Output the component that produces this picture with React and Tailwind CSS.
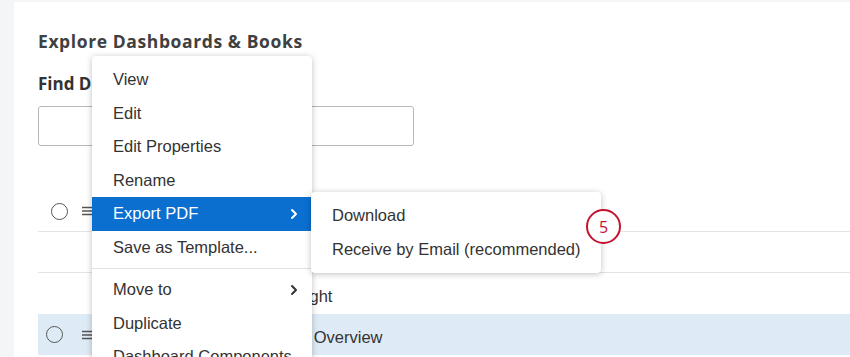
import React from 'react';

const rows = [
  { id: 1, name: 'Customer Satisfaction Dashboard', selectable: true, highlight: false },
  { id: 2, name: 'Quarterly Results Book', selectable: false, highlight: false },
  { id: 3, name: 'Customer Experience Spotlight', selectable: false, highlight: false },
  { id: 4, name: 'Employee Engagement Q3 Overview', selectable: true, highlight: true },
];

const menuItems = [
  { label: 'View' },
  { label: 'Edit' },
  { label: 'Edit Properties' },
  { label: 'Rename' },
  { label: 'Export PDF', sub: true, active: true },
  { label: 'Save as Template...' },
  { divider: true },
  { label: 'Move to', sub: true },
  { label: 'Duplicate' },
  { label: 'Dashboard Components' },
];

function Chevron({ className }) {
  return (
    <svg viewBox="0 0 8 12" className={className} fill="none" stroke="currentColor" strokeWidth="2" strokeLinecap="round" strokeLinejoin="round">
      <path d="M2 2l4 4-4 4" />
    </svg>
  );
}

function Hamburger() {
  return (
    <svg viewBox="0 0 11 10" className="w-[11px] h-[10px] text-[#555]" fill="none" stroke="currentColor" strokeWidth="1.4">
      <path d="M0 1.5h11M0 5h11M0 8.5h11" />
    </svg>
  );
}

export default function App() {
  return (
    <div className="relative w-[850px] h-[357px] overflow-hidden bg-[#f4f5f7] pl-[14px] pt-[2px] font-['Liberation_Sans',sans-serif] text-[#333]">
      <div className="h-full bg-white pl-[24px]">
        {/* Header */}
        <h2 className="pt-[28px] text-[17.5px] leading-[22px] font-bold tracking-[0.6px] text-[#404040] font-['Open_Sans',sans-serif]">
          Explore Dashboards &amp; Books
        </h2>
        <div className="mt-[22px] text-[17px] leading-[20px] font-bold text-[#333] font-['Open_Sans',sans-serif]">
          Find Dashboards
        </div>
        <div className="mt-[12px] w-[376px] h-[40px] rounded-[3px] border border-[#b8b8b8] bg-white" />

        {/* List */}
        <div className="mt-[45px]">
          {rows.map((row) => (
            <div
              key={row.id}
              className={`flex items-center h-[41px] text-[16.5px] ${
                row.highlight ? 'bg-[#deebf6] pl-[8px]' : 'pl-[13px]'
              } ${row.id < 3 ? 'border-b border-[#e4e4e4]' : ''}`}
            >
              <span
                className={`w-[17px] h-[17px] rounded-full shrink-0 ${
                  row.selectable ? 'border-[1.5px] border-[#555]' : ''
                }`}
              />
              <span className={`${row.highlight ? 'ml-[19px]' : 'ml-[14px]'} shrink-0 ${row.selectable ? '' : 'invisible'}`}>
                <Hamburger />
              </span>
              <span className={`${row.highlight ? 'ml-[18px]' : 'ml-[12px]'} mt-[6px] whitespace-nowrap`}>{row.name}</span>
            </div>
          ))}
        </div>
      </div>

      {/* Context menu */}
      <div className="absolute left-[92px] top-[56px] w-[220px] bg-white rounded-[4px] shadow-[0_1px_6px_rgba(0,0,0,0.25)] pt-[7px] z-10">
        {menuItems.map((item, i) =>
          item.divider ? (
            <div key={i} className="my-[4px] h-px bg-[#e2e2e2]" />
          ) : (
            <div
              key={i}
              className={`flex items-center justify-between h-[33.5px] pl-[21px] pr-[14px] text-[16.5px] ${
                item.active ? 'bg-[#0b6fd0] text-white' : 'text-[#333]'
              }`}
            >
              <span className="whitespace-nowrap">{item.label}</span>
              {item.sub && <Chevron className="w-[8px] h-[12px]" />}
            </div>
          )
        )}
      </div>

      {/* Submenu */}
      <div className="absolute left-[311px] top-[192px] w-[290px] bg-white rounded-[4px] shadow-[0_1px_6px_rgba(0,0,0,0.25)] py-[7px] z-20">
        <div className="flex items-center h-[33.5px] pl-[21px] text-[16.5px] text-[#333]">Download</div>
        <div className="flex items-center h-[33.5px] pl-[21px] text-[16.5px] text-[#333]">Receive by Email (recommended)</div>
      </div>

      {/* Step marker */}
      <div className="absolute left-[586px] top-[209px] w-[35px] h-[35px] rounded-full border-[2.5px] border-[#c41230] bg-white flex items-center justify-center text-[#c41230] text-[16px] font-medium font-['Open_Sans',sans-serif] z-30">
        5
      </div>
    </div>
  );
}
